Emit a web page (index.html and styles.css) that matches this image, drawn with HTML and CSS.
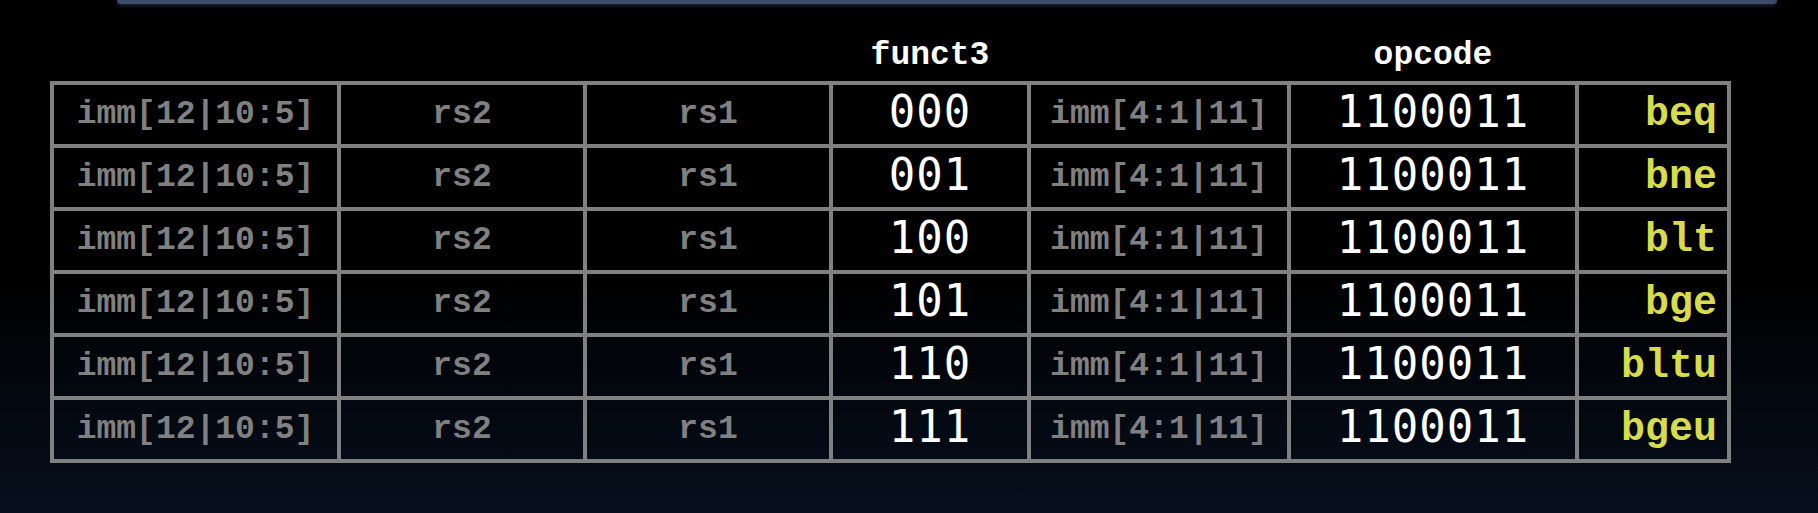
FILE: index.html
```html
<!DOCTYPE html>
<html>
<head>
<meta charset="utf-8">
<link rel="stylesheet" href="styles.css">
</head>
<body>
<div class="topbar"></div>
<div class="main">
  <div class="heads">
    <div></div><div></div><div></div>
    <div class="head">funct3</div>
    <div></div>
    <div class="head">opcode</div>
    <div></div>
  </div>
  <div class="table">
    <div class="cell dim">imm[12|10:5]</div><div class="cell dim">rs2</div><div class="cell dim">rs1</div><div class="cell num">000</div><div class="cell dim">imm[4:1|11]</div><div class="cell num">1100011</div><div class="cell name">beq</div>
    <div class="cell dim">imm[12|10:5]</div><div class="cell dim">rs2</div><div class="cell dim">rs1</div><div class="cell num">001</div><div class="cell dim">imm[4:1|11]</div><div class="cell num">1100011</div><div class="cell name">bne</div>
    <div class="cell dim">imm[12|10:5]</div><div class="cell dim">rs2</div><div class="cell dim">rs1</div><div class="cell num">100</div><div class="cell dim">imm[4:1|11]</div><div class="cell num">1100011</div><div class="cell name">blt</div>
    <div class="cell dim">imm[12|10:5]</div><div class="cell dim">rs2</div><div class="cell dim">rs1</div><div class="cell num">101</div><div class="cell dim">imm[4:1|11]</div><div class="cell num">1100011</div><div class="cell name">bge</div>
    <div class="cell dim">imm[12|10:5]</div><div class="cell dim">rs2</div><div class="cell dim">rs1</div><div class="cell num">110</div><div class="cell dim">imm[4:1|11]</div><div class="cell num">1100011</div><div class="cell name">bltu</div>
    <div class="cell dim">imm[12|10:5]</div><div class="cell dim">rs2</div><div class="cell dim">rs1</div><div class="cell num">111</div><div class="cell dim">imm[4:1|11]</div><div class="cell num">1100011</div><div class="cell name">bgeu</div>
  </div>
</div>
</body>
</html>
```

FILE: styles.css
```css
html, body {
  margin: 0;
  padding: 0;
}
body {
  width: 1818px;
  height: 513px;
  overflow: hidden;
  background: linear-gradient(to bottom, #000 0%, #000 55%, #040a14 85%, #06101c 100%);
  font-family: "Liberation Mono", "Courier New", monospace;
}
.topbar {
  height: 4px;
  margin-left: 117px;
  width: 1660px;
  background: #3d4c68;
  border-radius: 0 0 6px 6px;
  box-shadow: 0 1px 4px rgba(80, 100, 140, 0.55);
}
.main {
  padding-left: 50px;
}
.heads {
  display: grid;
  grid-template-columns: 287px 246px 246px 198px 260px 288px 152px;
  height: 77px;
  padding-left: 4px;
  box-sizing: border-box;
  align-items: end;
  padding-bottom: 9px;
}
.head {
  color: #fff;
  font-weight: bold;
  font-size: 33px;
  line-height: 33px;
  text-align: center;
  padding-right: 4px;
}
.table {
  display: grid;
  grid-template-columns: 287px 246px 246px 198px 260px 288px 152px;
  grid-auto-rows: 63px;
  width: 1681px;
  box-sizing: border-box;
  border-left: 4px solid #808080;
  border-top: 4px solid #808080;
}
.cell {
  box-sizing: border-box;
  border-right: 4px solid #808080;
  border-bottom: 4px solid #808080;
  display: flex;
  align-items: center;
  justify-content: center;
  white-space: nowrap;
}
.dim {
  color: #808080;
  font-weight: bold;
  font-size: 33px;
}
.num {
  color: #fff;
  font-family: "DejaVu Sans Mono", monospace;
  font-size: 44px;
  letter-spacing: 1px;
  padding-bottom: 6px;
}
.name {
  justify-content: flex-end;
  color: #d8dc4c;
  font-weight: bold;
  font-size: 40px;
  padding-right: 10px;
}
```
